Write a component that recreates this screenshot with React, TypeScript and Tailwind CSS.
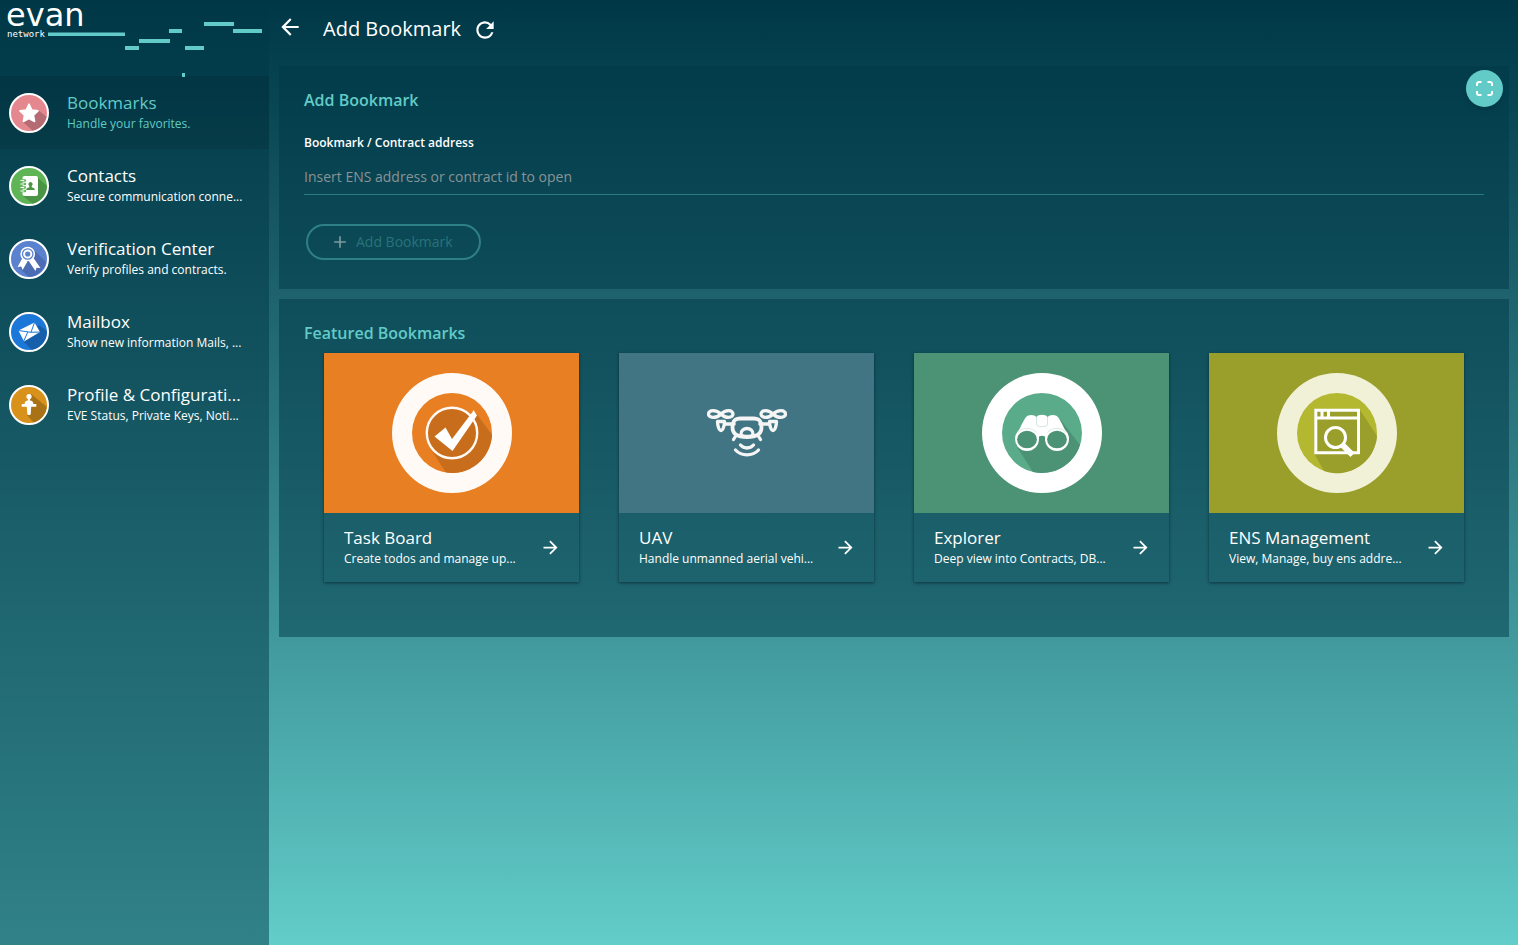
import type { ReactNode } from "react";
import { MdAdd, MdArrowBack, MdArrowForward, MdRefresh } from "react-icons/md";

type Entry = { title: string; text: string; color: string; icon: ReactNode };

function StarIcon() {
  return (
    <svg viewBox="2 2 36 36" className="size-full" aria-hidden="true">
      <path d="M29 17 38 24A19 19 0 0 1 24 38L14 29Z" fill="#b56b74" />
      <path d="M20 11.200 22.800 17 29 17.900 24.500 22.300 25.600 28.500 20 25.600 14.400 28.500 15.500 22.300 11 17.900 17.200 17Z" fill="#fff" stroke="#fff" strokeWidth="1.600" strokeLinejoin="round" />
    </svg>
  );
}

function ContactsIcon() {
  return (
    <svg viewBox="2 2 36 36" className="size-full" aria-hidden="true">
      <path d="M28 11 38 20A19 19 0 0 1 24 38L14 30Z" fill="#4b9345" />
      <rect x="13.500" y="10" width="15.500" height="20" rx="2" fill="#fff" />
      <path d="M12 14.500h4M12 18h4M12 21.500h4M12 25h4" stroke="#5fb556" strokeWidth="2.400" strokeLinecap="round" />
      <path d="M11.800 14.500h3M11.800 18h3M11.800 21.500h3M11.800 25h3" stroke="#fff" strokeWidth="1" strokeLinecap="round" />
      <path d="M21.500 16a2.200 2.200 0 0 1 1.200 4v1.200c2 .6 3.100 1.200 3.100 2.900h-8.600c0-1.700 1.100-2.300 3.100-2.900V20a2.200 2.200 0 0 1 1.200-4Z" fill="#4b9345" />
    </svg>
  );
}

function AwardIcon() {
  return (
    <svg viewBox="2 2 36 36" className="size-full" aria-hidden="true">
      <path d="M24 10 37 23A19 19 0 0 1 20 38L10 29Z" fill="#4c6cb4" />
      <path d="M13.500 19 8.500 28 12.200 27.600 13.600 31 18.500 22.500ZM24.500 19 31.500 29 27.500 28.800 26.500 32 20 22.500Z" fill="#fff" />
      <circle cx="18.700" cy="15" r="6.600" fill="#5b82cf" stroke="#fff" strokeWidth="1.500" />
      <circle cx="18.700" cy="15" r="3.600" fill="#5b82cf" stroke="#fff" strokeWidth="2" />
    </svg>
  );
}

function MailIcon() {
  return (
    <svg viewBox="2 2 36 36" className="size-full" aria-hidden="true">
      <path d="M30 13 38 19A19 19 0 0 1 23 38L14 29Z" fill="#185fab" />
      <path d="M9.500 18.500 25.500 10.500 31 20 15 29.500Z" fill="#fff" />
      <path d="M9.500 18.500 22 20.300 25.500 10.500M14.500 29.500 18.800 20M31 20 22 20.300" fill="none" stroke="#1b78d8" strokeWidth="1" />
    </svg>
  );
}

function ProfileIcon() {
  return (
    <svg viewBox="2 2 36 36" className="size-full" aria-hidden="true">
      <path d="M22 9 38 22A19 19 0 0 1 25 38L18 30 19 23Z" fill="#a97216" />
      <circle cx="20" cy="11.500" r="2.600" fill="#fff" />
      <path d="M19 13h2v2.400c2.200.3 3.300 1.200 3.400 3.600h2.900v2.700h-5.100l-.5 7.500a1 1 0 0 1-1 .8h-1.400a1 1 0 0 1-1-.8l-.5-7.500h-5.100V19h2.900c.1-2.400 1.200-3.300 3.400-3.600Z" fill="#fff" />
    </svg>
  );
}

function CheckArt() {
  return (
    <svg viewBox="0 0 120 120" className="size-[120px]" aria-hidden="true">
      <circle cx="60" cy="60" r="60" fill="#fffaf6" />
      <circle cx="60" cy="60" r="40" fill="#e87f22" />
      <path d="M84 40 100 62A40 40 0 0 1 54 99.600L38 75Z" fill="#c86d1c" />
      <circle cx="60" cy="60" r="25.200" fill="#c86d1c" stroke="#fffaf6" strokeWidth="2.400" />
      <path d="M42.500 63.500 53.500 54.500 60 66 80.500 39 81.500 37 85 42.500 60.500 78Z" fill="#fff" />
    </svg>
  );
}

function DroneArt() {
  return (
    <svg viewBox="0 0 80 50" className="h-[50px] w-20" fill="none" stroke="#f5f5f5" strokeWidth="3.300" strokeLinecap="round" strokeLinejoin="round" aria-hidden="true">
      <path d="M14 6C11 3 8.500 2.600 6 2.600 0 2.600 0 9.400 6 9.400 8.500 9.400 11 9 14 6 17 3 19.500 2.600 21.500 2.600c6 0 6 6.800 0 6.800C19.500 9.400 17 9 14 6Z" />
      <path d="M66 6C69 3 71.500 2.600 74 2.600c6 0 6 6.800 0 6.800C71.500 9.400 69 9 66 6 63 3 60.500 2.600 58.500 2.600c-6 0-6 6.800 0 6.800C60.500 9.400 63 9 66 6Z" />
      <path d="M10.500 13.500h7c0 4-1.500 9-3.500 9s-3.500-5-3.500-9ZM62.500 13.500h7c0 4-1.500 9-3.500 9s-3.500-5-3.500-9Z" />
      <path d="M18 16h9M53 16h9" strokeWidth="3.600" />
      <path d="M33.500 10.500h13c5.500 0 8 2.500 8 9 0 7-6 9.500-14.500 9.500s-14.500-2.500-14.500-9.500c0-6.500 2.500-9 8-9Z" strokeWidth="3.800" />
      <path d="M34 26.500c-.5-8 12.500-8 12 0-1.500 2.500-10.500 2.500-12 0Z" />
      <path d="M29 27.500 26.500 31.500M51 27.500 53.500 31.500M33.500 37c3.500 4 9.500 4 13 0M28.500 42c6 6.500 17 6.500 23 0" />
    </svg>
  );
}

function BinocularsArt() {
  return (
    <svg viewBox="0 0 120 120" className="size-[120px]" aria-hidden="true">
      <circle cx="60" cy="60" r="60" fill="#fff" />
      <circle cx="60" cy="60" r="40" fill="#5aab8a" />
      <path d="M78 46 98 72A40 40 0 0 1 51 99L35 74Z" fill="#4c9274" />
      <path d="M34 65C36 58 41 49 43 45.500 45 41 52 41 54.500 44 56 41 64 41 65.500 44 68 41 75 41 77 45.500 79 49 84 58 86.500 65L70 76 63 63.500Q60 62 57 63.500L50 76Z" fill="#fff" />
      <path d="M54.500 44v7q0 2.500 3 2.500h5q3 0 3-2.500v-7" fill="none" stroke="#c9e0d6" strokeWidth=".8" />
      <circle cx="45" cy="66" r="12" fill="#fff" />
      <circle cx="75" cy="66" r="12" fill="#fff" />
      <ellipse cx="45" cy="66.500" rx="9.900" ry="8.800" fill="#4c9274" />
      <ellipse cx="75" cy="66.500" rx="9.900" ry="8.800" fill="#4c9274" />
      <path d="M35.500 60c4-6 15-6 19-.5M65.500 59.500c4-5.500 15-5.500 19 .5" fill="none" stroke="#c9e0d6" strokeWidth=".7" />
    </svg>
  );
}

function BrowserArt() {
  return (
    <svg viewBox="0 0 120 120" className="size-[120px]" aria-hidden="true">
      <circle cx="60" cy="60" r="60" fill="#f1f1d8" />
      <circle cx="60" cy="60" r="40" fill="#b3b830" />
      <path d="M83 37 100 63A40 40 0 0 1 47 98L37.500 81V37Z" fill="#9a9e2a" />
      <path d="M38.800 37.300h42.700v42.400H38.800ZM39 45h42.300M45 38v6M51.500 38v6" fill="none" stroke="#fff" strokeWidth="3" />
      <circle cx="58.500" cy="64.500" r="10" fill="none" stroke="#fff" strokeWidth="3" />
      <path d="M65 71.500 75.500 82" stroke="#fff" strokeWidth="6" />
    </svg>
  );
}

const menu: Entry[] = [
  { title: "Bookmarks", text: "Handle your favorites.", color: "bg-[#e5878f]", icon: <StarIcon /> },
  { title: "Contacts", text: "Secure communication conne...", color: "bg-[#5fb556]", icon: <ContactsIcon /> },
  { title: "Verification Center", text: "Verify profiles and contracts.", color: "bg-[#5b82cf]", icon: <AwardIcon /> },
  { title: "Mailbox", text: "Show new information Mails, ...", color: "bg-[#1b78d8]", icon: <MailIcon /> },
  { title: "Profile & Configurati...", text: "EVE Status, Private Keys, Noti...", color: "bg-[#d8911b]", icon: <ProfileIcon /> },
];

const cards: Entry[] = [
  { title: "Task Board", text: "Create todos and manage up...", color: "bg-[#e87f22]", icon: <CheckArt /> },
  { title: "UAV", text: "Handle unmanned aerial vehi...", color: "bg-[#417583]", icon: <DroneArt /> },
  { title: "Explorer", text: "Deep view into Contracts, DB...", color: "bg-[#4c9274]", icon: <BinocularsArt /> },
  { title: "ENS Management", text: "View, Manage, buy ens addre...", color: "bg-[#9a9e2a]", icon: <BrowserArt /> },
];

function Logo() {
  return (
    <div className="relative h-[76px] pl-[6px] text-white">
      <div className="font-['DejaVu_Sans'] text-[32px] leading-[30px]">evan</div>
      <div className="pl-px font-['DejaVu_Sans_Mono'] text-[9px] leading-[8px]">network</div>
      <svg viewBox="0 0 269 80" className="absolute top-0 left-0 h-20 w-[269px]" fill="#62cbc7" aria-hidden="true">
        <rect x="48" y="32.500" width="77" height="3.500" />
        <rect x="125" y="46" width="14" height="4" />
        <rect x="139" y="39" width="31" height="4" />
        <rect x="169" y="29" width="13" height="4" />
        <rect x="185" y="46" width="19" height="4" />
        <rect x="204" y="22" width="30" height="4" />
        <rect x="233" y="29" width="29" height="4" />
        <rect x="182" y="73" width="3" height="4" />
      </svg>
    </div>
  );
}

export default function App() {
  return (
    <div className="flex min-h-screen bg-linear-to-b from-[#003746] to-[#62cdc9] font-['Open_Sans','Noto_Sans',sans-serif] text-white">
      <aside className="w-[269px] shrink-0 bg-[#003748]/50">
        <Logo />
        <nav>
          {menu.map((item, i) => (
            <a
              key={item.title}
              href="#"
              className={
                i === 0
                  ? "flex h-[73px] items-center gap-[18px] bg-black/10 pr-4 pl-[9px] text-[#62cbc7]"
                  : "flex h-[73px] items-center gap-[18px] pr-4 pl-[9px]"
              }
            >
              <span className={`size-10 shrink-0 overflow-hidden rounded-full border-2 border-white ${item.color}`}>
                {item.icon}
              </span>
              <span className="min-w-0 flex-1 pb-[2px]">
                <span className="block truncate text-[17px] leading-6">{item.title}</span>
                <span className="block truncate text-[12px] leading-[18px]">{item.text}</span>
              </span>
            </a>
          ))}
        </nav>
      </aside>

      <main className="min-w-0 flex-1 pr-[9px] pl-[10px]">
        <header className="flex h-[66px] items-start pt-[14px]">
          <button type="button" aria-label="Back" className="-ml-[2px]">
            <MdArrowBack className="size-[26px]" />
          </button>
          <h1 className="ml-5 text-[20px] leading-[30px]">Add Bookmark</h1>
          <button type="button" aria-label="Reload" className="ml-[11px] pt-[3px]">
            <MdRefresh className="size-[26px]" />
          </button>
        </header>

        <section className="relative h-[223px] bg-[#003748]/50 px-[25px] pt-[22px]">
          <button
            type="button"
            aria-label="Fullscreen"
            className="absolute top-1 right-[6px] flex size-[37px] items-center justify-center rounded-full bg-[#62cbc7] shadow-md"
          >
            <svg viewBox="0 0 17 15" className="h-[15px] w-[17px]" fill="none" stroke="#fff" strokeWidth="2" aria-hidden="true">
              <path d="M1 5V3a2 2 0 0 1 2-2h2.500M11.500 1H14a2 2 0 0 1 2 2v2M16 10v2a2 2 0 0 1-2 2h-2.500M5.500 14H3a2 2 0 0 1-2-2v-2" />
            </svg>
          </button>
          <h2 className="text-[16px] leading-6 font-semibold text-[#62cbc7]">Add Bookmark</h2>
          <label htmlFor="address" className="mt-[22px] block text-[12px] leading-[18px] font-semibold">
            Bookmark / Contract address
          </label>
          <input
            id="address"
            type="text"
            placeholder="Insert ENS address or contract id to open"
            className="mt-[7px] block h-9 w-full border-b border-[#2b7a80] bg-transparent text-[14px] outline-none placeholder:text-[#8a9396]"
          />
          <button
            type="button"
            disabled
            className="mt-[29px] ml-[2px] flex h-9 w-[175px] items-center gap-[6px] rounded-full border-2 border-[#2f7f86] pl-[22px] text-[14px] leading-5 text-[#287379]"
          >
            <MdAdd className="size-5 text-[#7a9a9f]" />
            Add Bookmark
          </button>
        </section>

        <section className="mt-[10px] bg-[#003748]/50 px-[25px] pt-[22px] pb-[55px]">
          <h2 className="text-[16px] leading-6 font-semibold text-[#62cbc7]">Featured Bookmarks</h2>
          <div className="mt-2 grid grid-cols-4 gap-10 px-5">
            {cards.map((card) => (
              <a key={card.title} href="#" className="block min-w-0 shadow-[0_1px_3px_rgba(0,20,30,0.6)]">
                <div className={`flex h-40 items-center justify-center ${card.color}`}>{card.icon}</div>
                <div className="flex h-[69px] items-center justify-between pr-[18px] pl-5">
                  <div className="min-w-0 flex-1 pb-px">
                    <div className="truncate text-[17px] leading-6">{card.title}</div>
                    <div className="truncate text-[12px] leading-[18px]">{card.text}</div>
                  </div>
                  <MdArrowForward className="size-[21px] shrink-0" />
                </div>
              </a>
            ))}
          </div>
        </section>
      </main>
    </div>
  );
}
